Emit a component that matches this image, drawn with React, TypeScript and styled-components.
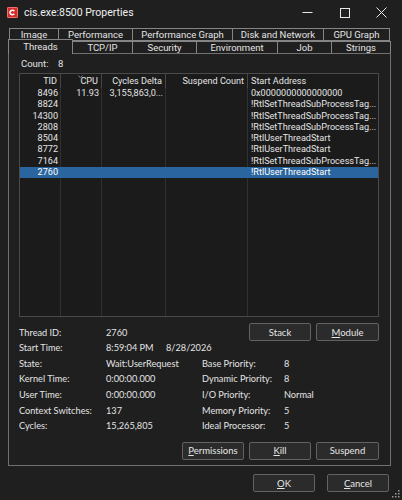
import styled, { createGlobalStyle } from "styled-components";

const GlobalStyle = createGlobalStyle`
  html, body {
    margin: 0;
    padding: 0;
    background: #1f1f1f;
  }
`;

type Thread = {
  tid: string;
  cpu?: string;
  cycles?: string;
  suspend?: string;
  start: string;
  selected?: boolean;
};

const threads: Thread[] = [
  { tid: "8496", cpu: "11.93", cycles: "3,155,863,0...", start: "0x0000000000000000" },
  { tid: "8824", start: "!RtlSetThreadSubProcessTag..." },
  { tid: "14300", start: "!RtlSetThreadSubProcessTag..." },
  { tid: "2808", start: "!RtlSetThreadSubProcessTag..." },
  { tid: "8504", start: "!RtlUserThreadStart" },
  { tid: "8772", start: "!RtlUserThreadStart" },
  { tid: "7164", start: "!RtlSetThreadSubProcessTag..." },
  { tid: "2760", start: "!RtlUserThreadStart", selected: true },
];

const topTabs = [
  { label: "Image", w: 50 },
  { label: "Performance", w: 75 },
  { label: "Performance Graph", w: 101 },
  { label: "Disk and Network", w: 92 },
  { label: "GPU Graph", w: 67 },
];

const bottomTabs = [
  { label: "Threads", w: 65, active: true },
  { label: "TCP/IP", w: 61 },
  { label: "Security", w: 65 },
  { label: "Environment", w: 82 },
  { label: "Job", w: 55 },
  { label: "Strings", w: 60 },
];

const columns = "41px 41px 64px 82px 1fr";

const Window = styled.div`
  position: relative;
  width: 402px;
  height: 500px;
  background: #1f1f1f;
  color: #e4e4e4;
  font-family: Roboto, "Liberation Sans", sans-serif;
  font-size: 9.5px;
  display: flex;
  flex-direction: column;
  overflow: hidden;
`;

const TitleBar = styled.div`
  height: 25px;
  display: flex;
  align-items: center;
  padding-left: 7px;
`;

const AppIcon = styled.svg`
  width: 11px;
  height: 11px;
  margin-right: 6px;
  flex: none;
`;

const Title = styled.span`
  flex: 1;
  font-family: Roboto, "Noto Sans", sans-serif;
  font-size: 10.5px;
  color: #f0f0f0;
`;

const Captions = styled.div`
  display: flex;
  padding-right: 2px;
`;

const CaptionButton = styled.div`
  width: 37px;
  height: 25px;
  display: flex;
  align-items: center;
  justify-content: center;
  svg {
    stroke: #e8e8e8;
    stroke-width: 1;
    fill: none;
  }
`;

const TabStrip = styled.div`
  margin: 3px 11px 0 8px;
  display: flex;
  flex-direction: column;
`;

const TabRow = styled.div<{ $h: number; $indent?: number }>`
  display: flex;
  align-items: flex-end;
  height: ${(p) => p.$h}px;
  padding-left: ${(p) => p.$indent ?? 0}px;
`;

const Tab = styled.div<{ $w: number; $active?: boolean; $closed?: boolean }>`
  position: relative;
  box-sizing: border-box;
  width: ${(p) => p.$w}px;
  height: ${(p) => (p.$active ? 15 : p.$closed ? 13 : 12)}px;
  margin-left: -1px;
  margin-bottom: ${(p) => (p.$active ? -1 : 0)}px;
  border: 1px solid #858585;
  border-bottom: ${(p) => (p.$closed ? "1px solid #858585" : "none")};
  background: #1f1f1f;
  z-index: ${(p) => (p.$active ? 2 : 1)};
  display: flex;
  align-items: ${(p) => (p.$active ? "flex-start" : "center")};
  justify-content: center;
  padding-top: ${(p) => (p.$active ? 1 : 0)}px;
  white-space: nowrap;
  line-height: 11px;
  &:first-child {
    margin-left: 0;
  }
`;

const Panel = styled.div`
  box-sizing: border-box;
  height: 413px;
  margin: 0 11px 0 8px;
  border: 1px solid #707070;
  padding: 2px 11px 0 10px;
  display: flex;
  flex-direction: column;
`;

const CountRow = styled.div`
  height: 14px;
  display: flex;
  align-items: center;
  padding-left: 2px;
  margin-bottom: 3px;
  span:first-child {
    width: 37px;
  }
`;

const List = styled.div`
  box-sizing: border-box;
  height: 244px;
  border: 1px solid #4a4a4a;
  background: #1b1b1b;
  font-size: 9.1px;
  display: flex;
  flex-direction: column;
  overflow: hidden;
`;

const HeaderRow = styled.div`
  display: grid;
  grid-template-columns: ${columns};
  height: 14px;
  flex: none;
`;

const HeaderCell = styled.div<{ $align?: string }>`
  position: relative;
  border-right: 1px solid #464646;
  padding: 0 3px;
  text-align: ${(p) => p.$align ?? "right"};
  line-height: 14px;
  white-space: nowrap;
  overflow: hidden;
  &:last-child {
    border-right: none;
  }
`;

const SortMark = styled.svg`
  position: absolute;
  left: 17px;
  top: 1px;
  width: 5px;
  height: 4px;
`;

const Row = styled.div<{ $selected?: boolean }>`
  display: grid;
  grid-template-columns: ${columns};
  height: 11.3px;
  flex: none;
  background: ${(p) => (p.$selected ? "#2a65a0" : "transparent")};
  color: ${(p) => (p.$selected ? "#ffffff" : "inherit")};
`;

const Cell = styled.div<{ $align?: string; $selected?: boolean }>`
  border-right: 1px solid ${(p) => (p.$selected ? "transparent" : "#303030")};
  padding: 0 2px 0 3px;
  text-align: ${(p) => p.$align ?? "right"};
  line-height: 11.3px;
  white-space: nowrap;
  overflow: hidden;
  &:last-child {
    border-right: none;
  }
`;

const Filler = styled.div`
  display: grid;
  grid-template-columns: ${columns};
  flex: 1;
  div {
    border-right: 1px solid #303030;
  }
  div:last-child {
    border-right: none;
  }
`;

const Details = styled.div`
  display: grid;
  grid-template-columns: 87px 96px 82px 1fr;
  grid-template-rows: 16px repeat(6, 15.6px);
  margin-top: 7px;
  font-family: Lato, "Liberation Sans", sans-serif;
  font-size: 9.2px;
`;

const Field = styled.div<{ $span?: string }>`
  align-self: center;
  white-space: nowrap;
  grid-column: ${(p) => p.$span ?? "auto"};
`;

const Time = styled.span`
  display: inline-block;
  width: 60px;
`;

const ButtonGroup = styled.div<{ $span?: string }>`
  display: flex;
  justify-content: flex-end;
  gap: 5px;
  align-self: center;
  grid-column: ${(p) => p.$span ?? "auto"};
`;

const Button = styled.button<{ $w?: number }>`
  box-sizing: border-box;
  width: ${(p) => p.$w ?? 62}px;
  height: 18px;
  padding: 0;
  background: #2b2b2b;
  border: 1px solid #626262;
  border-radius: 2px;
  color: #e6e6e6;
  font-family: Lato, "Liberation Sans", sans-serif;
  font-size: 9.5px;
  u {
    text-underline-offset: 1px;
  }
`;

const ActionRow = styled(ButtonGroup)`
  align-self: flex-end;
  margin-top: 8px;
`;

const Footer = styled.div`
  display: flex;
  justify-content: flex-end;
  gap: 12px;
  margin-top: 8px;
  padding-right: 13px;
`;

const Grip = styled.svg`
  position: absolute;
  right: 2px;
  bottom: 2px;
  width: 8px;
  height: 8px;
  fill: #9a9a9a;
`;

export default function App() {
  return (
    <Window>
      <GlobalStyle />
      <TitleBar>
        <AppIcon viewBox="0 0 11 11">
          <rect x="0" y="0" width="11" height="11" rx="1" fill="#d42b2b" />
          <rect x="0.5" y="0.5" width="10" height="10" rx="1" fill="none" stroke="#f07070" strokeWidth="1" />
          <path d="M7.3 4.2 A2.4 2.2 0 1 0 7.3 6.8" fill="none" stroke="#ffffff" strokeWidth="1.5" />
        </AppIcon>
        <Title>cis.exe:8500 Properties</Title>
        <Captions>
          <CaptionButton>
            <svg width="11" height="11" viewBox="0 0 11 11">
              <path d="M0.5 5.5 H10.5" />
            </svg>
          </CaptionButton>
          <CaptionButton>
            <svg width="10" height="10" viewBox="0 0 10 10">
              <rect x="0.5" y="0.5" width="9" height="9" />
            </svg>
          </CaptionButton>
          <CaptionButton>
            <svg width="11" height="11" viewBox="0 0 11 11">
              <path d="M0.5 0.5 L10.5 10.5 M10.5 0.5 L0.5 10.5" />
            </svg>
          </CaptionButton>
        </Captions>
      </TitleBar>

      <TabStrip>
        <TabRow $h={13} $indent={1}>
          {topTabs.map((t) => (
            <Tab key={t.label} $w={t.w} $closed>
              {t.label}
            </Tab>
          ))}
        </TabRow>
        <TabRow $h={12}>
          {bottomTabs.map((t) => (
            <Tab key={t.label} $w={t.w} $active={t.active}>
              {t.label}
            </Tab>
          ))}
        </TabRow>
      </TabStrip>

      <Panel>
        <CountRow>
          <span>Count:</span>
          <span>8</span>
        </CountRow>

        <List>
          <HeaderRow>
            <HeaderCell>TID</HeaderCell>
            <HeaderCell>
              <SortMark viewBox="0 0 5 4">
                <path d="M0.5 0.5 L2.5 3 L4.5 0.5" fill="none" stroke="#a0a0a0" strokeWidth="0.8" />
              </SortMark>
              CPU
            </HeaderCell>
            <HeaderCell>Cycles Delta</HeaderCell>
            <HeaderCell>Suspend Count</HeaderCell>
            <HeaderCell $align="left">Start Address</HeaderCell>
          </HeaderRow>
          {threads.map((t) => (
            <Row key={t.tid} $selected={t.selected}>
              <Cell $selected={t.selected}>{t.tid}</Cell>
              <Cell $selected={t.selected}>{t.cpu}</Cell>
              <Cell $selected={t.selected}>{t.cycles}</Cell>
              <Cell $selected={t.selected}>{t.suspend}</Cell>
              <Cell $selected={t.selected} $align="left">
                {t.start}
              </Cell>
            </Row>
          ))}
          <Filler>
            <div />
            <div />
            <div />
            <div />
            <div />
          </Filler>
        </List>

        <Details>
          <Field>Thread ID:</Field>
          <Field>2760</Field>
          <ButtonGroup $span="3 / 5">
            <Button>Stack</Button>
            <Button $w={63}>
              <u>M</u>odule
            </Button>
          </ButtonGroup>

          <Field>Start Time:</Field>
          <Field $span="2 / 5">
            <Time>8:59:04 PM</Time>8/28/2026
          </Field>

          <Field>State:</Field>
          <Field>Wait:UserRequest</Field>
          <Field>Base Priority:</Field>
          <Field>8</Field>

          <Field>Kernel Time:</Field>
          <Field>0:00:00.000</Field>
          <Field>Dynamic Priority:</Field>
          <Field>8</Field>

          <Field>User Time:</Field>
          <Field>0:00:00.000</Field>
          <Field>I/O Priority:</Field>
          <Field>Normal</Field>

          <Field>Context Switches:</Field>
          <Field>137</Field>
          <Field>Memory Priority:</Field>
          <Field>5</Field>

          <Field>Cycles:</Field>
          <Field>15,265,805</Field>
          <Field>Ideal Processor:</Field>
          <Field>5</Field>
        </Details>

        <ActionRow>
          <Button>
            <u>P</u>ermissions
          </Button>
          <Button>
            <u>K</u>ill
          </Button>
          <Button $w={63}>Suspend</Button>
        </ActionRow>
      </Panel>

      <Footer>
        <Button>
          <u>O</u>K
        </Button>
        <Button>
          <u>C</u>ancel
        </Button>
      </Footer>

      <Grip viewBox="0 0 8 8">
        <rect x="6" y="0" width="1.5" height="1.5" />
        <rect x="3" y="3" width="1.5" height="1.5" />
        <rect x="6" y="3" width="1.5" height="1.5" />
        <rect x="0" y="6" width="1.5" height="1.5" />
        <rect x="3" y="6" width="1.5" height="1.5" />
        <rect x="6" y="6" width="1.5" height="1.5" />
      </Grip>
    </Window>
  );
}
